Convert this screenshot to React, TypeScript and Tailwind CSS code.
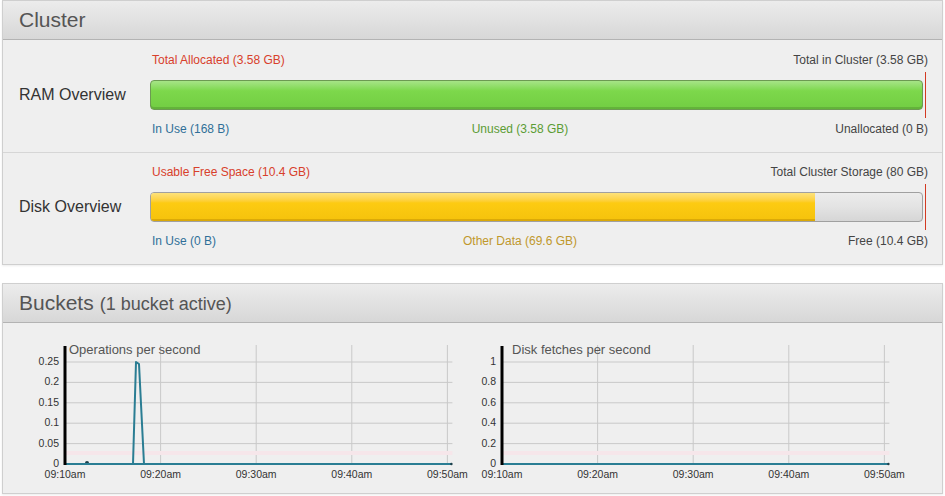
const font = { fontFamily: '"Liberation Sans", Arial, sans-serif' };

type BarRow = {
  label: string;
  topLeft: string;
  topRight: string;
  bottomLeft: string;
  bottomMid: string;
  bottomMidClass: string;
  bottomRight: string;
  kind: 'ram' | 'disk';
};

const rows: BarRow[] = [
  {
    label: 'RAM Overview',
    topLeft: 'Total Allocated (3.58 GB)',
    topRight: 'Total in Cluster (3.58 GB)',
    bottomLeft: 'In Use (168 B)',
    bottomMid: 'Unused (3.58 GB)',
    bottomMidClass: 'text-[#5b9c34]',
    bottomRight: 'Unallocated (0 B)',
    kind: 'ram',
  },
  {
    label: 'Disk Overview',
    topLeft: 'Usable Free Space (10.4 GB)',
    topRight: 'Total Cluster Storage (80 GB)',
    bottomLeft: 'In Use (0 B)',
    bottomMid: 'Other Data (69.6 GB)',
    bottomMidClass: 'text-[#c0982c]',
    bottomRight: 'Free (10.4 GB)',
    kind: 'disk',
  },
];

function PanelHeader({ children }: { children: React.ReactNode }) {
  return (
    <div className="flex h-[39px] items-center border-b border-[#b3b3b3] bg-linear-to-b from-[#ececec] to-[#d7d7d7] px-[16px] text-[21px] text-[#555]">
      {children}
    </div>
  );
}

function Bar({ kind }: { kind: 'ram' | 'disk' }) {
  return (
    <div className="relative mr-[5px]">
      {kind === 'ram' ? (
        <div className="h-[30px] rounded-[4px] border border-[#6c9a52] bg-linear-to-b from-[#a6e487] via-[#7dd84b] via-35% to-[#72cd43] shadow-[inset_0_-2px_0_rgba(70,130,40,0.35)]" />
      ) : (
        <div className="flex h-[30px] overflow-hidden rounded-[4px] border border-[#a0a0a0] bg-linear-to-b from-[#ececec] via-[#e3e3e3] to-[#d6d6d6]">
          <div className="h-full w-[86.1%] bg-linear-to-b from-[#fde27a] via-[#fdcb12] via-35% to-[#f5c20c] shadow-[inset_0_-2px_0_rgba(170,120,0,0.35)]" />
        </div>
      )}
      <div className="absolute top-[-8px] right-[-3px] h-[46px] w-px bg-[#d33a22]" />
    </div>
  );
}

function OverviewRow({ row, last }: { row: BarRow; last: boolean }) {
  return (
    <div className={`flex pb-[15px] ${last ? 'pt-[11px]' : 'border-b border-[#d6d6d6] pt-[12px]'}`}>
      <div className="flex w-[147px] items-center pl-[16px] text-[16px] text-[#333]">{row.label}</div>
      <div className="flex-1 pr-[14px] text-[12px] leading-[16px]">
        <div className="flex justify-between pl-[2px]">
          <span className="text-[#d8402b]">{row.topLeft}</span>
          <span className="text-[#444]">{row.topRight}</span>
        </div>
        <div className="mt-[12px]">
          <Bar kind={row.kind} />
        </div>
        <div className="mt-[11px] grid grid-cols-[1fr_auto_1fr] pl-[2px]">
          <span className="text-[#2f6f98]">{row.bottomLeft}</span>
          <span className={`${row.bottomMidClass} mr-[40px]`}>{row.bottomMid}</span>
          <span className="text-right text-[#444]">{row.bottomRight}</span>
        </div>
      </div>
    </div>
  );
}

type ChartProps = {
  width: number;
  axis: number;
  title: string;
  titleOffset: number;
  yLabels: string[];
  spike?: boolean;
};

const xLabels = ['09:10am', '09:20am', '09:30am', '09:40am', '09:50am'];
const yPos = [128, 107.6, 87.2, 66.8, 46.4, 26];

function Chart({ width, axis, title, titleOffset, yLabels, spike }: ChartProps) {
  const step = 95.6;
  const xs = xLabels.map((_, i) => axis + i * step);
  const end = xs[4] + 5;
  const sx = (v: number) => axis + v;
  return (
    <svg width={width} height={150} className="block overflow-visible" style={font}>
      {yPos.slice(1).map((y) => (
        <line key={y} x1={axis} x2={end} y1={y} y2={y} stroke="#c9c9c9" strokeWidth={1} />
      ))}
      {xs.slice(1).map((x) => (
        <line key={x} x1={x} x2={x} y1={9} y2={128} stroke="#c9c9c9" strokeWidth={1} />
      ))}
      <rect x={axis} y={115} width={end - axis} height={4} fill="#f6e6ea" />
      {yLabels.map((l, i) => (
        <text key={l} x={axis - 6} y={yPos[i] + 3} textAnchor="end" fontSize={10.5} fill="#333">
          {l}
        </text>
      ))}
      {xLabels.map((l, i) => (
        <text key={l} x={xs[i]} y={142} textAnchor="middle" fontSize={10.5} fill="#333">
          {l}
        </text>
      ))}
      <text x={axis + titleOffset} y={18} fontSize={13} fill="#555">
        {title}
      </text>
      {spike && (
        <>
          <line x1={sx(66)} x2={sx(79)} y1={128} y2={128} stroke="#111" strokeWidth={2} />
          <circle cx={sx(22)} cy={127} r={2} fill="#1d3f4a" />
          <polyline
            points={`${sx(68)},128 ${sx(71)},26 ${sx(74)},28 ${sx(79)},128`}
            fill="none"
            stroke="#2a7d93"
            strokeWidth={2}
            strokeLinejoin="round"
          />
        </>
      )}
      <line x1={axis} x2={end - 1} y1={128} y2={128} stroke="#2a7d93" strokeWidth={2} />
      <circle cx={end - 1} cy={128} r={1.2} fill="#1d3f4a" />
      <line x1={axis} x2={axis} y1={10} y2={129} stroke="#000" strokeWidth={3} />
    </svg>
  );
}

export default function App() {
  return (
    <div className="min-h-screen bg-white" style={font}>
      <div className="mx-[2px] w-[941px] border border-[#cfcfcf] bg-[#efefef] shadow-[0_1px_2px_rgba(0,0,0,0.08)]">
        <PanelHeader>Cluster</PanelHeader>
        {rows.map((row, i) => (
          <OverviewRow key={row.label} row={row} last={i === rows.length - 1} />
        ))}
      </div>

      <div className="mx-[2px] mt-[18px] w-[941px] border border-[#cfcfcf] bg-[#efefef] shadow-[0_1px_2px_rgba(0,0,0,0.08)]">
        <PanelHeader>
          <span>Buckets</span>
          <span className="ml-[6px] pt-[2px] text-[18px]">(1 bucket active)</span>
        </PanelHeader>
        <div className="flex pt-[13px] pb-[7px] pl-[17px]">
          <Chart
            width={440}
            axis={45}
            title="Operations per second"
            titleOffset={4}
            yLabels={['0', '0.05', '0.1', '0.15', '0.2', '0.25']}
            spike
          />
          <Chart
            width={460}
            axis={42}
            title="Disk fetches per second"
            titleOffset={10}
            yLabels={['0', '0.2', '0.4', '0.6', '0.8', '1']}
          />
        </div>
      </div>
    </div>
  );
}
